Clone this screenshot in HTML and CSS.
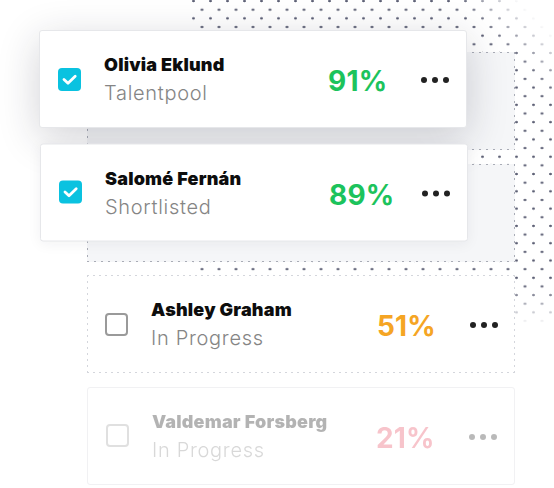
FILE: index.html
```html
<!DOCTYPE html>
<html lang="en">
<head>
<meta charset="utf-8">
<title>Candidates</title>
<link rel="stylesheet" href="styles.css">
</head>
<body>
<div class="stage">
  <div class="dots-wrap"><div class="dots"></div></div>
  <div class="slots">
    <div class="slot">
      <div class="card lifted lift-1">
        <span class="check on"><svg viewBox="0 0 23 23" width="23" height="23"><path d="M6 11.5 L10 15.2 L17.2 8.3" fill="none" stroke="#fff" stroke-width="2.8" stroke-linecap="round" stroke-linejoin="round"/></svg></span>
        <div class="info"><div class="name">Olivia Eklund</div><div class="status">Talentpool</div></div>
        <div class="score green">91%</div>
        <div class="more"><i></i><i></i><i></i></div>
      </div>
    </div>
    <div class="slot">
      <div class="card lifted lift-2">
        <span class="check on"><svg viewBox="0 0 23 23" width="23" height="23"><path d="M6 11.5 L10 15.2 L17.2 8.3" fill="none" stroke="#fff" stroke-width="2.8" stroke-linecap="round" stroke-linejoin="round"/></svg></span>
        <div class="info"><div class="name">Salomé Fernán</div><div class="status">Shortlisted</div></div>
        <div class="score green">89%</div>
        <div class="more"><i></i><i></i><i></i></div>
      </div>
    </div>
    <div class="slot plain">
      <div class="card dotted">
        <span class="check"></span>
        <div class="info"><div class="name">Ashley Graham</div><div class="status">In Progress</div></div>
        <div class="score orange">51%</div>
        <div class="more"><i></i><i></i><i></i></div>
      </div>
    </div>
    <div class="slot plain">
      <div class="card faded">
        <span class="check"></span>
        <div class="info"><div class="name">Valdemar Forsberg</div><div class="status">In Progress</div></div>
        <div class="score red">21%</div>
        <div class="more"><i></i><i></i><i></i></div>
      </div>
    </div>
  </div>
</div>
</body>
</html>
```
FILE: styles.css
```css
* { box-sizing: border-box; }
html, body { margin: 0; padding: 0; background: #fff; }
body { font-family: Inter, "Noto Sans", "Liberation Sans", sans-serif; }

.stage {
  position: relative;
  width: 554px;
  height: 488px;
  overflow: hidden;
}

/* decorative dot field */
.dots-wrap {
  position: absolute;
  left: 190px;
  top: 0;
  width: 364px;
  height: 330px;
  -webkit-mask-image: linear-gradient(to bottom, #000 0, #000 285px, transparent 325px);
  mask-image: linear-gradient(to bottom, #000 0, #000 285px, transparent 325px);
}
.dots {
  width: 100%;
  height: 100%;
  background-image:
    radial-gradient(circle, #5d6075 1px, transparent 1.55px),
    radial-gradient(circle, #5d6075 1px, transparent 1.55px);
  background-size: 17px 17.3px, 17px 17.3px;
  background-position: 12px -7.6px, 3.5px 1.05px;
  -webkit-mask-image: linear-gradient(225deg, transparent 0, transparent 25px, #000 70px);
  mask-image: linear-gradient(225deg, transparent 0, transparent 25px, #000 70px);
}

.slots {
  position: relative;
  z-index: 1;
  display: flex;
  flex-direction: column;
  gap: 13.5px;
  padding: 52px 0 0 87px;
}

.slot {
  width: 428px;
  height: 98px;
  background:
    repeating-linear-gradient(90deg, #a9acb6 0 2px, transparent 2px 7px) left top / 100% 1px no-repeat,
    repeating-linear-gradient(90deg, #a9acb6 0 2px, transparent 2px 7px) left bottom / 100% 1px no-repeat,
    repeating-linear-gradient(180deg, #a9acb6 0 2px, transparent 2px 7px) left top / 1px 100% no-repeat,
    repeating-linear-gradient(180deg, #a9acb6 0 2px, transparent 2px 7px) right top / 1px 100% no-repeat,
    #f5f6f8;
}
.slot.plain { background: transparent; }

.card {
  width: 428px;
  height: 98px;
  display: flex;
  align-items: center;
  padding: 0 17px 0 17.5px;
  background: #fff;
  border-radius: 3px;
}

.lifted { border: 1px solid #e6e7ea; position: relative; }
.lift-1 {
  transform: translate(-48px, -22px);
  box-shadow: 0 10px 42px rgba(30, 32, 48, 0.2);
}
.lift-2 {
  transform: translate(-47px, -20.5px);
  box-shadow: 0 2px 14px rgba(30, 32, 48, 0.06);
}

.card.dotted {
  border-radius: 0;
  background:
    repeating-linear-gradient(90deg, #d4d6dc 0 2px, transparent 2px 6px) left top / 100% 1px no-repeat,
    repeating-linear-gradient(90deg, #d4d6dc 0 2px, transparent 2px 6px) left bottom / 100% 1px no-repeat,
    repeating-linear-gradient(180deg, #d4d6dc 0 2px, transparent 2px 6px) left top / 1px 100% no-repeat,
    repeating-linear-gradient(180deg, #d4d6dc 0 2px, transparent 2px 6px) right top / 1px 100% no-repeat,
    #fff;
}

.card.faded {
  border: 1px solid #f1f1f3;
}
.card.faded > * { opacity: 0.31; }

.check {
  flex: none;
  width: 23px;
  height: 23px;
  border-radius: 4px;
  border: 2px solid #9a9a9a;
  display: block;
}
.check.on {
  border: none;
  background: #0ac2e0;
}
.check svg { display: block; }

.info {
  flex: 1;
  margin-left: 23.5px;
  margin-top: 2px;
  min-width: 0;
}
.name {
  font-size: 18px;
  line-height: 22px;
  font-weight: 900;
  color: #0d0d0d;
  letter-spacing: 0.2px;
  white-space: nowrap;
}
.status {
  margin-top: 4px;
  font-size: 20px;
  line-height: 26px;
  font-weight: 300;
  color: #858585;
  letter-spacing: 0.7px;
  white-space: nowrap;
}

.score {
  flex: none;
  width: 93px;
  font-size: 28px;
  line-height: 32px;
  font-weight: 700;
  margin-top: 4px;
  letter-spacing: 0.2px;
}
.green { color: #1cc35c; }
.orange { color: #f5a524; }
.red { color: #e8445a; }

.more {
  flex: none;
  width: 28px;
  display: flex;
  justify-content: space-between;
  margin-top: 2px;
}
.more i {
  display: block;
  width: 6px;
  height: 6px;
  border-radius: 50%;
  background: #222;
}
```
